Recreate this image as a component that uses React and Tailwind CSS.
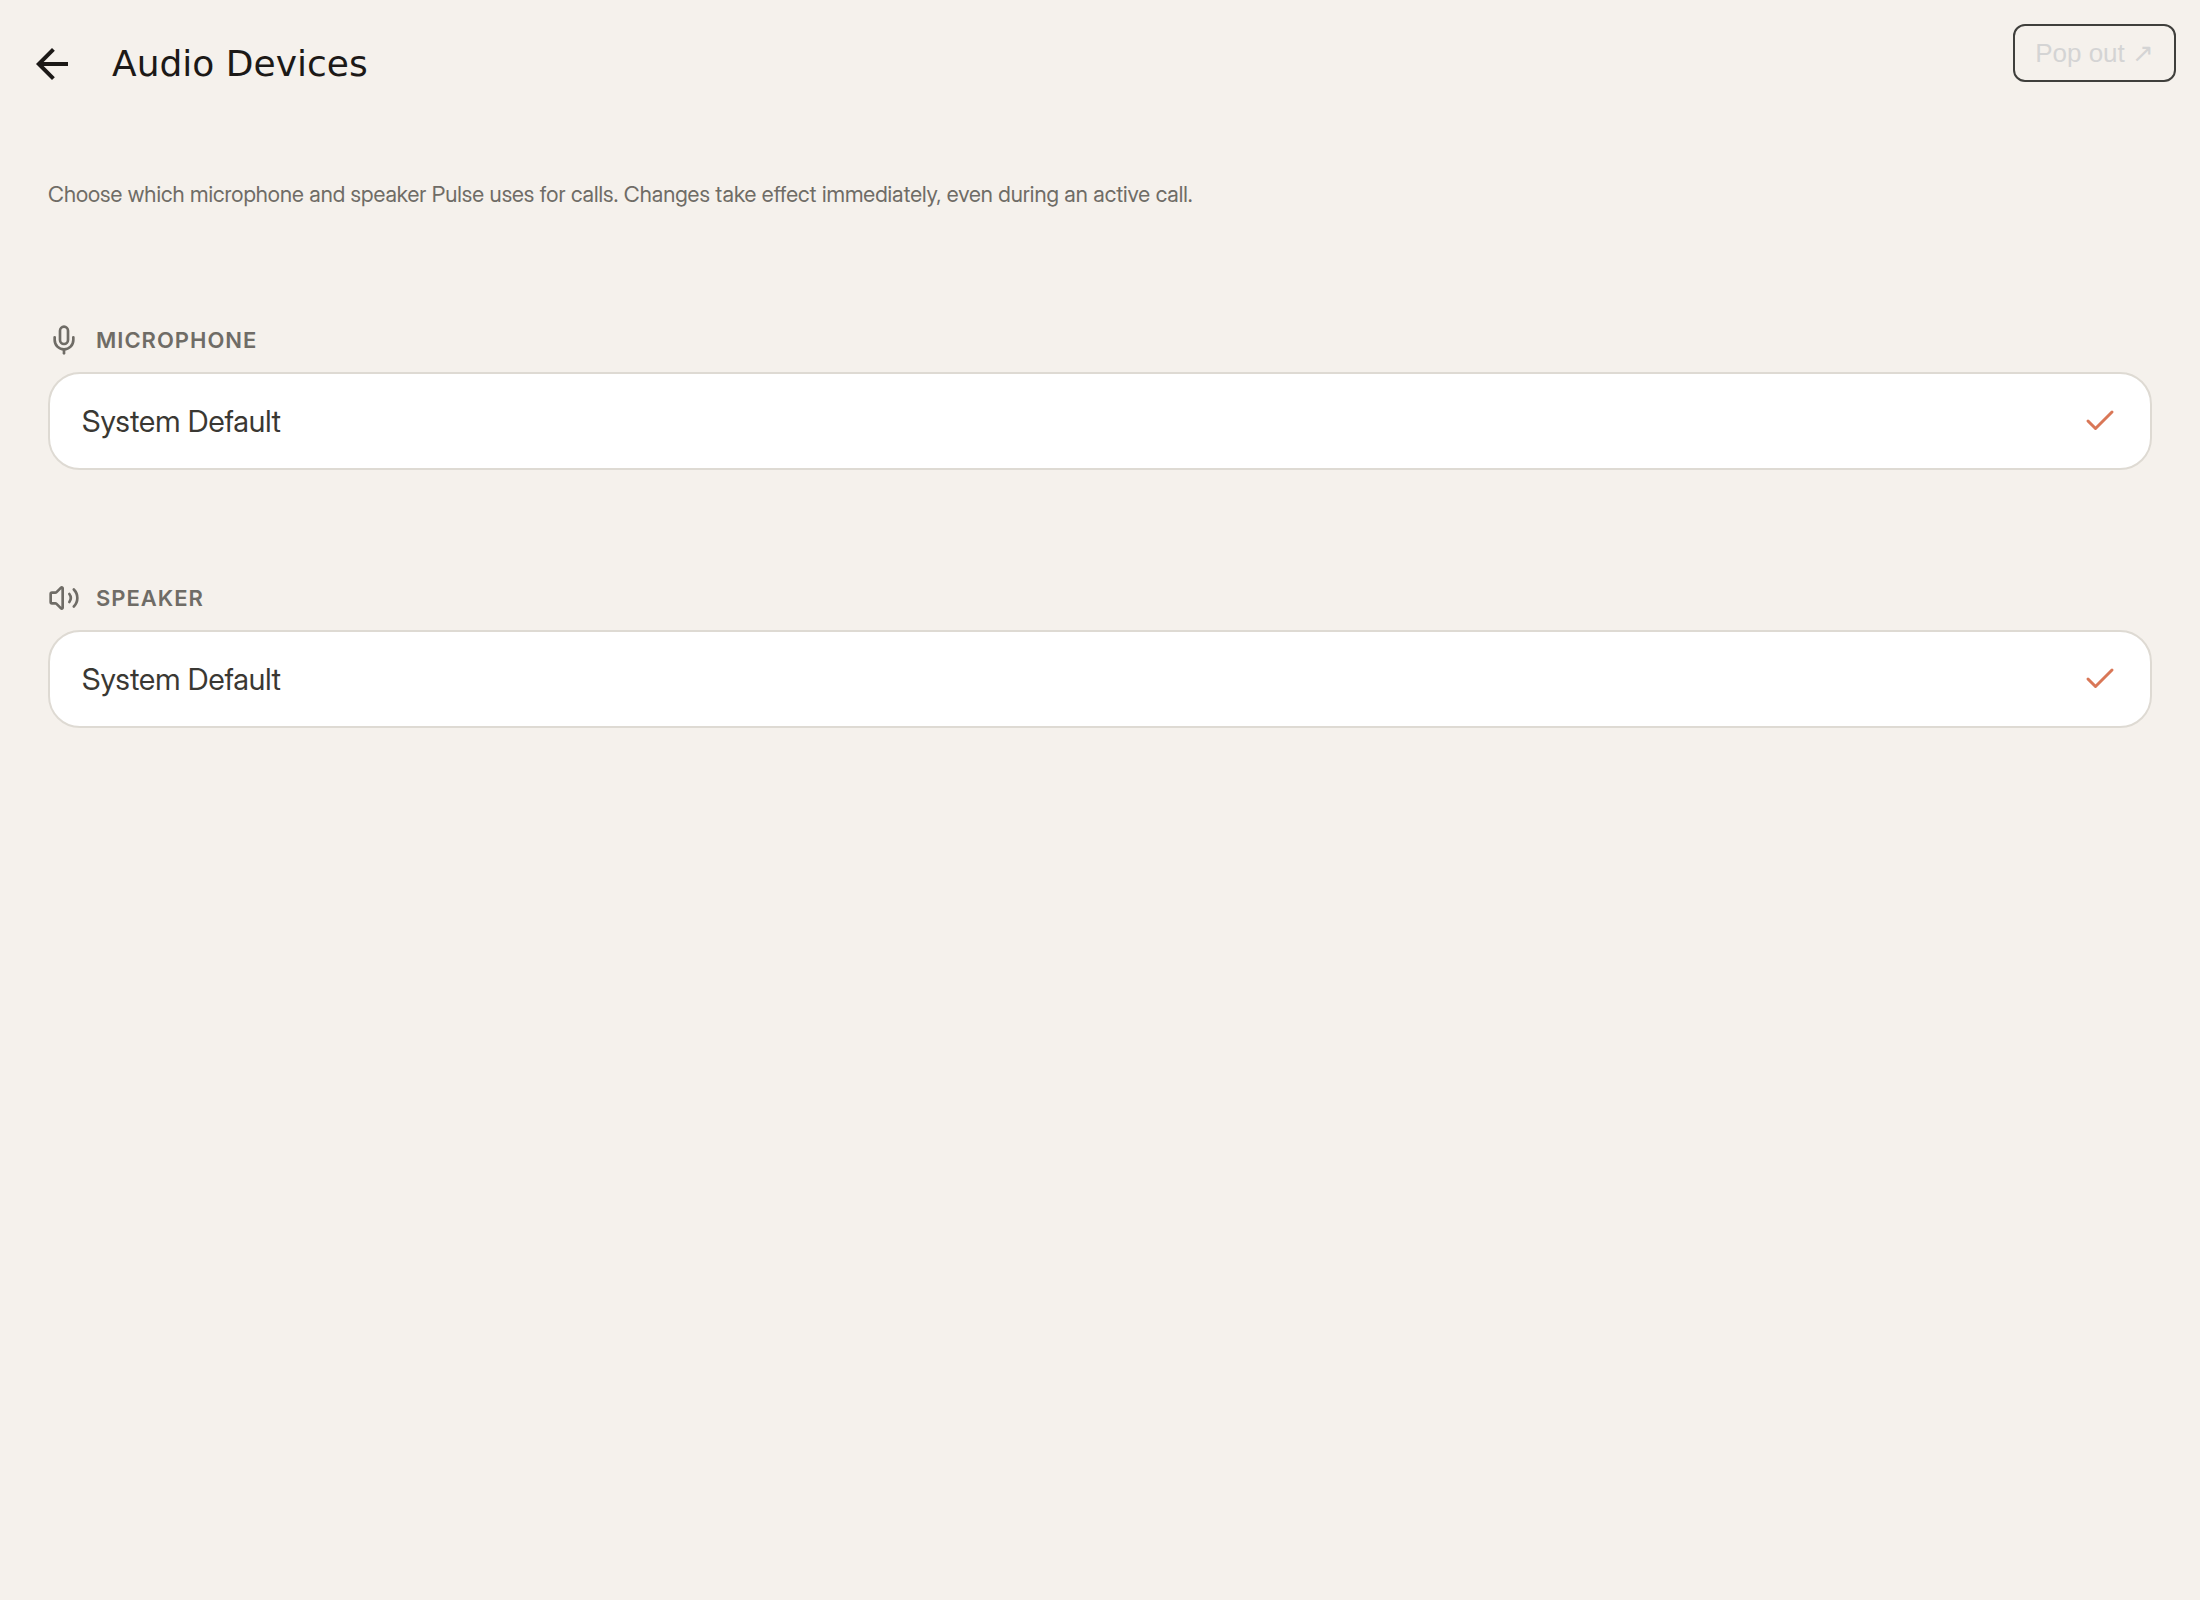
import React, { useState } from 'react';
import { Check, Mic, Volume2 } from 'lucide-react';
import { MdArrowBack } from 'react-icons/md';

const sections = [
  { id: 'microphone', label: 'Microphone', icon: Mic, devices: ['System Default'] },
  { id: 'speaker', label: 'Speaker', icon: Volume2, devices: ['System Default'] },
];

const DeviceSection = ({ section }) => {
  const [selected, setSelected] = useState(section.devices[0]);
  const Icon = section.icon;

  return (
    <section aria-labelledby={section.id}>
      <div className="flex items-center gap-4 h-8 mb-4 text-[#6f6c66]">
        <Icon className="w-8 h-8" />
        <h2
          id={section.id}
          className="text-[22px] leading-8 font-semibold uppercase tracking-[1px] font-['Inter',sans-serif]"
        >
          {section.label}
        </h2>
      </div>
      <div className="bg-white border-2 border-[#dedad3] rounded-[32px] overflow-hidden">
        {section.devices.map((device) => (
          <button
            key={device}
            type="button"
            aria-pressed={selected === device}
            onClick={() => setSelected(device)}
            className="flex w-full items-center justify-between px-8 py-6 text-left text-[30px] leading-[46px] text-[#3a3833]"
          >
            {device}
            {selected === device && <Check className="w-9 h-9 text-[#d97757]" />}
          </button>
        ))}
      </div>
    </section>
  );
};

const App = () => {
  return (
    <div className="min-h-screen bg-[#f5f1ec] font-['Inter_Display','Inter',sans-serif]">
      {/* Header */}
      <header className="flex items-start justify-between pl-7 pr-6 pt-6">
        <div className="flex items-center gap-9 h-20 text-[#1c1917]">
          <button type="button" aria-label="Back">
            <MdArrowBack className="w-12 h-12" />
          </button>
          <h1 className="text-4xl font-['DejaVu_Sans',sans-serif]">Audio Devices</h1>
        </div>
        <button
          type="button"
          className="border-2 border-[#3f3f3c] rounded-xl px-5 py-3 text-[26px] leading-[30px] text-[#d4d4d4] font-['Liberation_Sans',sans-serif]"
        >
          Pop out ↗
        </button>
      </header>

      {/* Devices */}
      <main className="px-12 pt-[74px]">
        <p className="text-[22px] leading-8 text-[#6f6c66]">
          Choose which microphone and speaker Pulse uses for calls. Changes take effect immediately, even during an
          active call.
        </p>
        <div className="flex flex-col gap-28 pt-[114px]">
          {sections.map((section) => (
            <DeviceSection key={section.id} section={section} />
          ))}
        </div>
      </main>
    </div>
  );
};

export default App;
